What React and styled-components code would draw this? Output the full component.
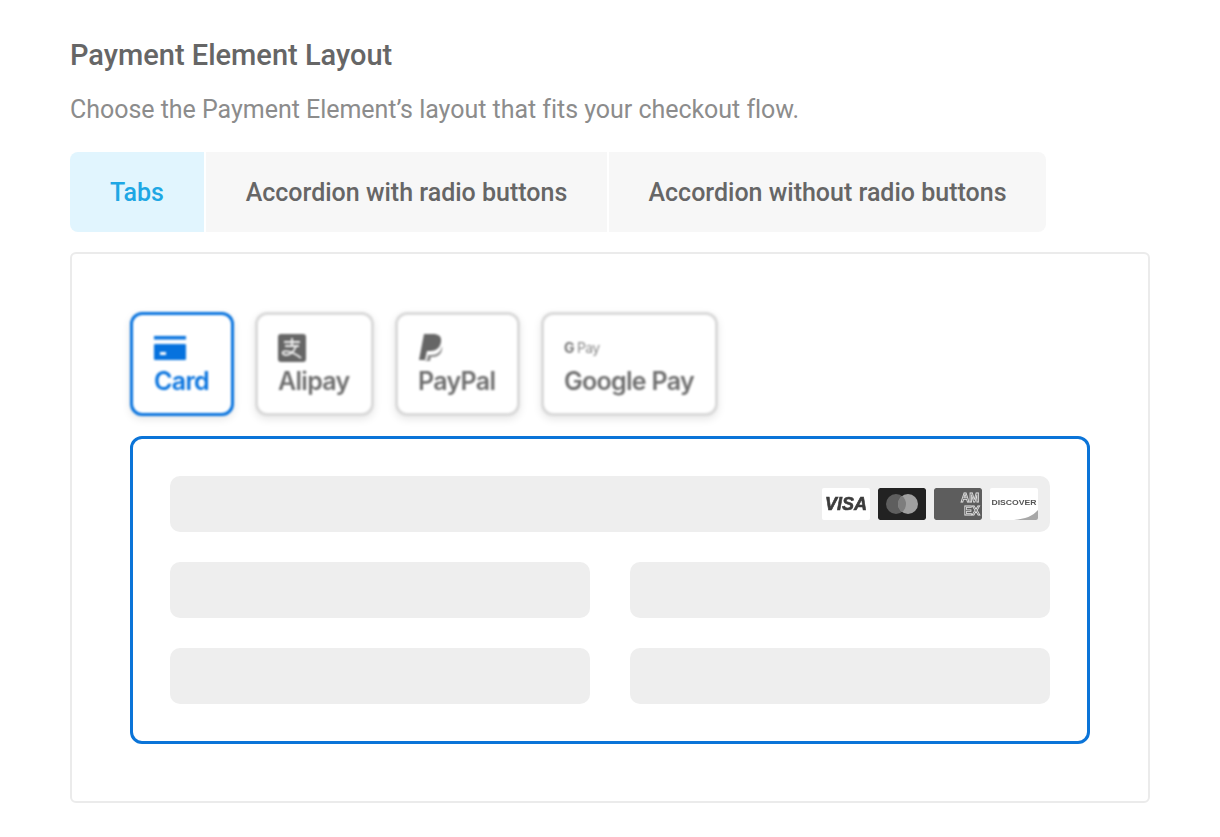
import React from 'react';
import styled, { createGlobalStyle } from 'styled-components';

const GlobalStyle = createGlobalStyle`
  html, body {
    margin: 0;
    padding: 0;
    background: #ffffff;
  }
`;

const Page = styled.div`
  width: 1220px;
  height: 837px;
  box-sizing: border-box;
  padding: 37px 70px 0;
  font-family: Roboto, "Liberation Sans", sans-serif;
  overflow: hidden;
`;

const Title = styled.h2`
  margin: 0;
  height: 37px;
  font-size: 29px;
  line-height: 37px;
  font-weight: 500;
  color: #666666;
`;

const Subtitle = styled.p`
  margin: 20px 0 0;
  height: 32px;
  font-size: 25px;
  line-height: 32px;
  font-weight: 400;
  letter-spacing: -0.03px;
  color: #8c8c8c;
`;

const TabBar = styled.div`
  display: flex;
  gap: 2px;
  margin-top: 26px;
  width: 976px;
  height: 80px;
`;

const Tab = styled.div`
  display: flex;
  align-items: center;
  justify-content: center;
  width: ${(p) => p.$width}px;
  font-size: 25px;
  font-weight: 500;
  color: ${(p) => (p.$active ? '#1ea7e4' : '#666666')};
  background: ${(p) => (p.$active ? '#e1f5fe' : '#f7f7f7')};
  &:first-child {
    border-radius: 8px 0 0 8px;
  }
  &:last-child {
    border-radius: 0 8px 8px 0;
  }
`;

const PreviewCard = styled.div`
  box-sizing: border-box;
  margin-top: 20px;
  width: 1080px;
  height: 551px;
  padding: 58px 58px 0;
  border: 2px solid #ebebeb;
  border-radius: 6px;
`;

const MethodRow = styled.div`
  display: flex;
  gap: 21px;
  filter: blur(0.8px);
`;

const Method = styled.div`
  box-sizing: border-box;
  display: flex;
  flex-direction: column;
  width: ${(p) => p.$width}px;
  height: 104px;
  padding: 18px 0 0 ${(p) => p.$inset}px;
  border: 3px solid ${(p) => (p.$active ? '#0672de' : '#dadada')};
  border-radius: 12px;
  background: #ffffff;
  box-shadow: 0 3px 9px rgba(0, 0, 0, 0.1);
  font-family: Inter, "Liberation Sans", sans-serif;
  font-size: 25px;
  line-height: 30px;
  font-weight: 600;
  letter-spacing: -0.7px;
  color: ${(p) => (p.$active ? '#0672de' : '#6e6e6e')};
`;

const MethodIcon = styled.div`
  display: flex;
  align-items: center;
  height: 30px;
  margin-bottom: 3px;
`;

const GPayMark = styled.span`
  font-size: 14px;
  line-height: 30px;
  font-weight: 400;
  letter-spacing: -0.6px;
  color: #8a8a8a;
  & b {
    font-weight: 700;
    margin-right: 3px;
    color: #777777;
  }
`;

const Panel = styled.div`
  box-sizing: border-box;
  display: flex;
  flex-direction: column;
  gap: 30px;
  margin-top: 20px;
  width: 960px;
  height: 308px;
  padding: 37px;
  border: 3px solid #0b74d8;
  border-radius: 12px;
`;

const FieldRow = styled.div`
  display: grid;
  grid-template-columns: 1fr 1fr;
  gap: 40px;
`;

const Field = styled.div`
  display: flex;
  align-items: center;
  justify-content: flex-end;
  gap: 8px;
  height: 56px;
  padding-right: 12px;
  border-radius: 10px;
  background: #eeeeee;
  grid-column: ${(p) => (p.$wide ? '1 / -1' : 'auto')};
`;

const Brand = styled.div`
  width: 48px;
  height: 32px;
  border-radius: 2px;
  overflow: hidden;
  filter: blur(0.7px);
  & svg {
    display: block;
  }
`;

const CardIcon = () => (
  <svg width="32" height="24" viewBox="0 0 32 24">
    <rect x="0" y="0" width="32" height="3.5" fill="#0672de" />
    <rect x="0" y="8" width="32" height="16" rx="1" fill="#0672de" />
    <rect x="6" y="16" width="6" height="3" fill="#ffffff" />
  </svg>
);

const AlipayIcon = () => (
  <svg width="28" height="28" viewBox="0 0 28 28">
    <rect width="28" height="28" rx="3" fill="#666666" />
    <path
      d="M14 4v7M6 8h16M7 12h14M18 12c-2 6-6 9-10 9-3 0-4-2-3-3 2-2 9-1 18 6"
      fill="none"
      stroke="#f2f2f2"
      strokeWidth="1.8"
    />
  </svg>
);

const PayPalIcon = () => (
  <svg width="26" height="30" viewBox="0 0 26 30">
    <path d="M6 1h9c5 0 9 2 8 8-1 6-5 9-11 9H9l-2 9H1z" fill="#666666" />
    <path d="M9 27l1-5h3c6 0 10-3 11-9 1 5-2 11-9 11h-2l-1 4H6z" fill="#8a8a8a" />
  </svg>
);

const Visa = () => (
  <svg width="48" height="32" viewBox="0 0 48 32">
    <rect width="48" height="32" fill="#ffffff" />
    <text x="24" y="22" textAnchor="middle" fontFamily="Liberation Sans, sans-serif" fontSize="18" fontWeight="700" fontStyle="italic" stroke="#3c3c3c" strokeWidth="0.6" fill="#3c3c3c">VISA</text>
  </svg>
);

const Mastercard = () => (
  <svg width="48" height="32" viewBox="0 0 48 32">
    <rect width="48" height="32" rx="2" fill="#222222" />
    <circle cx="18" cy="16" r="10" fill="#5e5e5e" />
    <circle cx="30" cy="16" r="10" fill="#a0a0a0" />
    <path d="M24 8a10 10 0 0 1 0 16a10 10 0 0 1 0-16z" fill="#7d7d7d" />
  </svg>
);

const Amex = () => (
  <svg width="48" height="32" viewBox="0 0 48 32">
    <rect width="48" height="32" rx="2" fill="#5d5d5d" />
    <text x="36" y="14" textAnchor="middle" fontFamily="Liberation Sans, sans-serif" fontSize="12" fontWeight="700" fill="none" stroke="#e0e0e0" strokeWidth="0.8">AM</text>
    <text x="38" y="27" textAnchor="middle" fontFamily="Liberation Sans, sans-serif" fontSize="12" fontWeight="700" fill="none" stroke="#e0e0e0" strokeWidth="0.8">EX</text>
  </svg>
);

const Discover = () => (
  <svg width="48" height="32" viewBox="0 0 48 32">
    <rect width="48" height="32" fill="#ffffff" />
    <path d="M48 32H24c11-1 19-4 24-10z" fill="#a8a8a8" />
    <text x="24" y="17" textAnchor="middle" fontFamily="Liberation Sans, sans-serif" fontSize="8" fontWeight="700" textLength="45" lengthAdjust="spacingAndGlyphs" fill="#555555">DISCOVER</text>
  </svg>
);

const App = () => (
  <Page>
    <GlobalStyle />
    <Title>Payment Element Layout</Title>
    <Subtitle>Choose the Payment Element’s layout that fits your checkout flow.</Subtitle>
    <TabBar>
      <Tab $width={134} $active>Tabs</Tab>
      <Tab $width={401}>Accordion with radio buttons</Tab>
      <Tab $width={437}>Accordion without radio buttons</Tab>
    </TabBar>
    <PreviewCard>
      <MethodRow>
        <Method $width={104} $inset={21} $active>
          <MethodIcon><CardIcon /></MethodIcon>
          Card
        </Method>
        <Method $width={119} $inset={20}>
          <MethodIcon><AlipayIcon /></MethodIcon>
          Alipay
        </Method>
        <Method $width={125} $inset={20}>
          <MethodIcon><PayPalIcon /></MethodIcon>
          PayPal
        </Method>
        <Method $width={177} $inset={20}>
          <MethodIcon><GPayMark><b>G</b>Pay</GPayMark></MethodIcon>
          Google Pay
        </Method>
      </MethodRow>
      <Panel>
        <FieldRow>
          <Field $wide>
            <Brand><Visa /></Brand>
            <Brand><Mastercard /></Brand>
            <Brand><Amex /></Brand>
            <Brand><Discover /></Brand>
          </Field>
        </FieldRow>
        <FieldRow>
          <Field />
          <Field />
        </FieldRow>
        <FieldRow>
          <Field />
          <Field />
        </FieldRow>
      </Panel>
    </PreviewCard>
  </Page>
);

export default App;
